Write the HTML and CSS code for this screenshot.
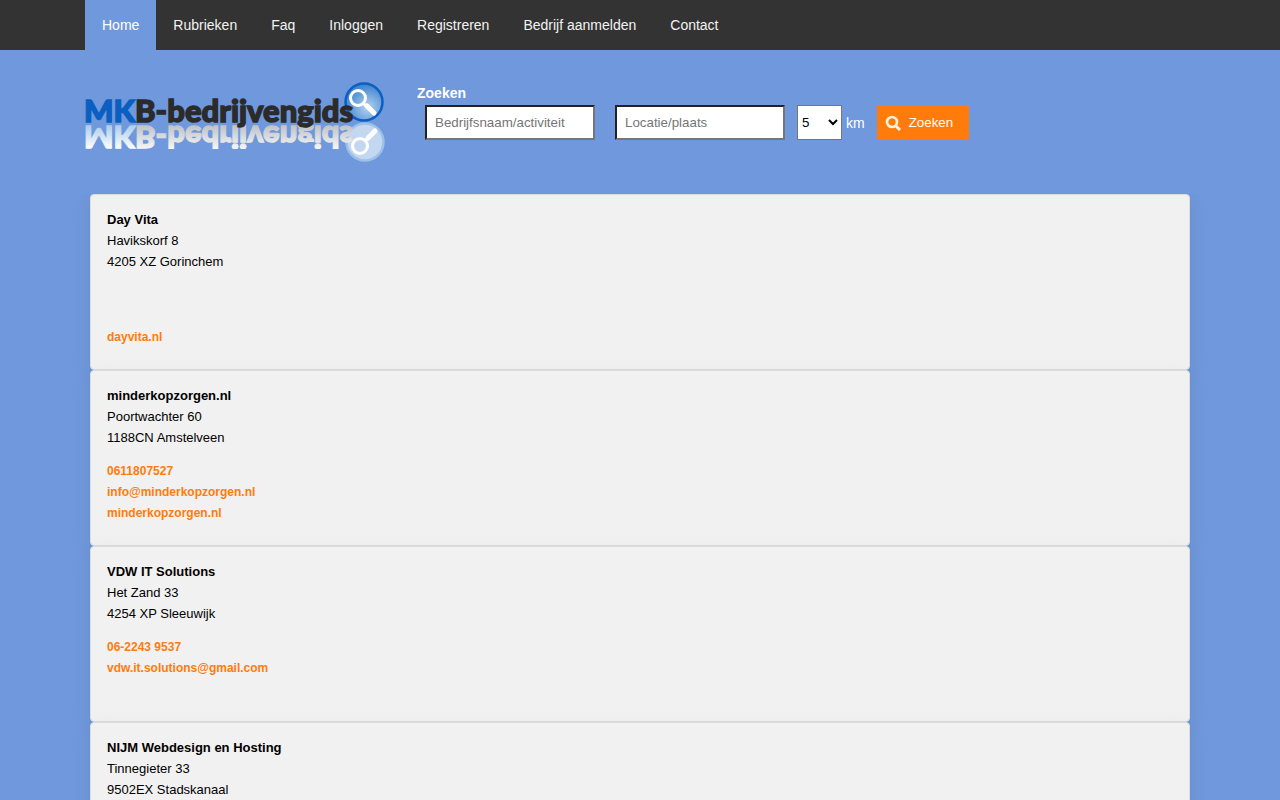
FILE: index.html
```html
<!DOCTYPE html>
<html lang="nl">
<head>
    <meta charset="UTF-8">
    <meta name="viewport" content="width=device-width, initial-scale=1.0">
    <title>MKB-bedrijvengids</title>
    <link rel="stylesheet" href="styles.css">
</head>
<body>
    <nav class="topnav">
        <div class="container nav-links">
            <a class="active" href="#">Home</a>
            <a href="#">Rubrieken</a>
            <a href="#">Faq</a>
            <a href="#">Inloggen</a>
            <a href="#">Registreren</a>
            <a href="#">Bedrijf aanmelden</a>
            <a href="#">Contact</a>
        </div>
    </nav>

    <header class="container header">
        <a class="logo" href="#" aria-label="MKB-bedrijvengids">
            <svg width="302" height="84" viewBox="0 0 302 84">
                <defs>
                    <radialGradient id="lens" cx="0.6" cy="0.65" r="0.6">
                        <stop offset="0" stop-color="#b4d4f0"/>
                        <stop offset="1" stop-color="#4386cf"/>
                    </radialGradient>
                    <linearGradient id="mirrorBlue" x1="0" y1="0" x2="0" y2="1">
                        <stop offset="0.2" stop-color="#ffffff"/>
                        <stop offset="0.9" stop-color="#a3c8e8"/>
                    </linearGradient>
                    <linearGradient id="mirrorDark" x1="0" y1="0" x2="0" y2="1">
                        <stop offset="0.2" stop-color="#f7f7f7"/>
                        <stop offset="0.9" stop-color="#b9bcc2"/>
                    </linearGradient>
                    <clipPath id="mirrorClip">
                        <rect x="0" y="45" width="270" height="24"/>
                    </clipPath>
                </defs>
                <circle cx="279" cy="22" r="18.5" fill="url(#lens)" stroke="#0a5fc0" stroke-width="2.5"/>
                <g fill="none" stroke="#fff" stroke-linecap="round">
                    <circle cx="273" cy="18" r="7.5" stroke-width="3"/>
                    <path d="M279 24l3 3" stroke-width="3"/>
                    <path d="M282 26l7 7" stroke-width="5"/>
                </g>
                <circle cx="280" cy="62" r="18.5" fill="#c3d8f0" stroke="#9dc0e8" stroke-width="2.5"/>
                <g fill="none" stroke="#fff" stroke-linecap="round">
                    <circle cx="275" cy="66" r="7.5" stroke-width="3"/>
                    <path d="M281 60l3-3" stroke-width="3"/>
                    <path d="M283 58l7-7" stroke-width="5"/>
                </g>
                <g clip-path="url(#mirrorClip)">
                    <text class="logo-text" x="-1" y="0" transform="translate(0 46) scale(1 -1)"><tspan fill="url(#mirrorBlue)" stroke="url(#mirrorBlue)">MK</tspan><tspan fill="url(#mirrorDark)" stroke="url(#mirrorDark)">B-bedrijvengids</tspan></text>
                </g>
                <text class="logo-text" x="-1" y="42"><tspan fill="#0a5fc0" stroke="#0a5fc0">MK</tspan><tspan fill="#2b2b2b" stroke="#2b2b2b">B-bedrijvengids</tspan></text>
            </svg>
        </a>
        <form class="search">
            <strong>Zoeken</strong>
            <div class="search-row">
                <input type="text" placeholder="Bedrijfsnaam/activiteit" aria-label="Bedrijfsnaam/activiteit">
                <input type="text" placeholder="Locatie/plaats" aria-label="Locatie/plaats">
                <div class="distance">
                    <select id="distance">
                        <option>5</option>
                        <option>10</option>
                        <option>25</option>
                        <option>50</option>
                    </select>
                    <label for="distance">km</label>
                </div>
                <button type="submit">
                    <svg width="16" height="16" viewBox="0 0 16 16" fill="none" stroke="#fff4dc">
                        <circle cx="7" cy="7" r="5" stroke-width="2.6"/>
                        <path d="M11 11l4 4" stroke-width="3"/>
                    </svg>
                    Zoeken
                </button>
            </div>
        </form>
    </header>

    <main class="results">
        <article class="card">
            <div class="address">
                <strong>Day Vita</strong>
                <span>Havikskorf 8</span>
                <span>4205 XZ Gorinchem</span>
            </div>
            <div class="links">
                <a href="#">dayvita.nl</a>
            </div>
        </article>
        <article class="card">
            <div class="address">
                <strong>minderkopzorgen.nl</strong>
                <span>Poortwachter 60</span>
                <span>1188CN Amstelveen</span>
            </div>
            <div class="links">
                <a class="phone" href="#">0611807527</a>
                <a class="mail" href="#">info@minderkopzorgen.nl</a>
                <a href="#">minderkopzorgen.nl</a>
            </div>
        </article>
        <article class="card">
            <div class="address">
                <strong>VDW IT Solutions</strong>
                <span>Het Zand 33</span>
                <span>4254 XP Sleeuwijk</span>
            </div>
            <div class="links">
                <a class="phone" href="#">06-2243 9537</a>
                <a class="mail" href="#">vdw.it.solutions@gmail.com</a>
            </div>
        </article>
        <article class="card">
            <div class="address">
                <strong>NIJM Webdesign en Hosting</strong>
                <span>Tinnegieter 33</span>
                <span>9502EX Stadskanaal</span>
            </div>
            <div class="links"></div>
        </article>
    </main>
</body>
</html>
```
FILE: styles.css
```css
* {
    box-sizing: border-box;
}
body {
    margin: 0;
    background: #7098dc;
    color: #000;
    font-family: "Liberation Sans", Arial, sans-serif;
    font-size: 14px;
}
.container {
    max-width: 1110px;
    margin: 0 auto;
}
.topnav {
    background: #333;
}
.nav-links {
    display: flex;
    flex-wrap: wrap;
}
.nav-links a {
    padding: 0 17px;
    line-height: 50px;
    color: #f2f2f2;
    font-size: 14px;
    text-decoration: none;
}
.nav-links a.active {
    background: #7098dc;
    color: #fff;
}
.header {
    display: flex;
    flex-wrap: wrap;
    align-items: flex-start;
    gap: 30px;
    padding: 30px 0;
}
.logo svg {
    display: block;
}
.logo-text {
    font-family: Lato, sans-serif;
    font-size: 31px;
    font-weight: 900;
    stroke-width: 1.4px;
}
.search {
    padding-top: 5px;
    color: #fff;
}
.search strong {
    display: block;
    line-height: 16px;
}
.search-row {
    display: flex;
    flex-wrap: wrap;
    align-items: center;
    margin: 4px 0 0 8px;
}
.search input {
    width: 170px;
    height: 35px;
    margin-right: 20px;
    padding: 8px;
    border: 2px solid;
    border-color: #222 #767676 #767676 #222;
    font-family: inherit;
}
.distance {
    display: flex;
    align-items: center;
    gap: 4px;
    margin: 0 12px 0 -8px;
}
.search select {
    width: 45px;
    height: 35px;
    background: #fff;
    font-family: inherit;
}
.search button {
    display: flex;
    align-items: center;
    gap: 8px;
    height: 35px;
    padding: 0 16px 0 8px;
    border: none;
    background: #ff7c0c;
    color: #fff;
    font-family: inherit;
    cursor: pointer;
}
.results {
    max-width: 1140px;
    margin: 0 auto;
    padding: 0 20px;
    overflow: hidden;
}
.card {
    display: flex;
    flex-direction: column;
    justify-content: space-between;
    min-height: 176px;
    padding: 14px 16px 21px;
    background: #f1f1f1;
    border: 1px solid #dcdcdc;
    border-radius: 4px;
    box-shadow: 0 6px 20px rgba(0, 0, 0, 0.08);
    font-size: 13px;
    line-height: 21px;
}
.address {
    display: flex;
    flex-direction: column;
}
.links {
    display: grid;
    grid-template-rows: repeat(3, 21px);
    justify-items: start;
}
.links a {
    grid-row: 3;
    color: #ff7c0c;
    font-size: 12px;
    font-weight: bold;
    text-decoration: none;
}
.links .phone {
    grid-row: 1;
}
.links .mail {
    grid-row: 2;
}
```
